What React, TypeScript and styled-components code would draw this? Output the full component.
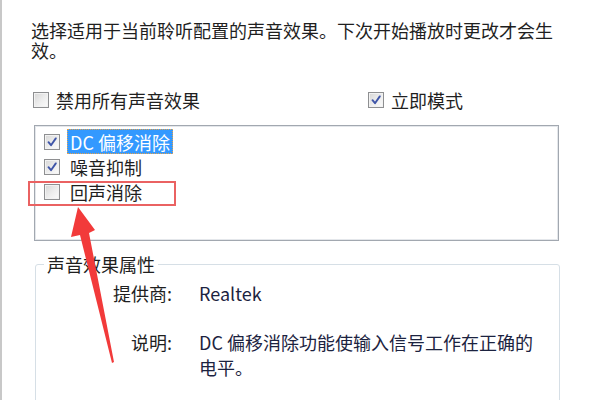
import styled, { createGlobalStyle } from "styled-components";

const GlobalStyle = createGlobalStyle`
  html, body {
    margin: 0;
    padding: 0;
    background: #ffffff;
  }
  body {
    font-family: "Noto Sans CJK SC", "Noto Sans", sans-serif;
    color: #1f1f1f;
  }
`;

const items = [
  { label: "DC 偏移消除", checked: true, selected: true },
  { label: "噪音抑制", checked: true, selected: false },
  { label: "回声消除", checked: false, selected: false },
];

const CheckBox = ({ checked }: { checked: boolean }) => (
  <Box>
    {checked && (
      <svg width="12" height="12" viewBox="0 0 12 12">
        <path
          d="M2.5 6.2 L5 9.2 L9.8 2.4"
          fill="none"
          stroke="#3f55a8"
          strokeWidth="1.9"
          strokeLinecap="round"
          strokeLinejoin="round"
        />
      </svg>
    )}
  </Box>
);

const App = () => {
  return (
    <>
      <GlobalStyle />
      <Page>
        <Intro>
          选择适用于当前聆听配置的声音效果。下次开始播放时更改才会生效。
        </Intro>

        <OptionsRow>
          <Option>
            <CheckBox checked={false} />
            <span>禁用所有声音效果</span>
          </Option>
          <Option>
            <CheckBox checked />
            <span>立即模式</span>
          </Option>
        </OptionsRow>

        <ListBox>
          {items.map((item) => (
            <ListItem key={item.label}>
              <CheckBox checked={item.checked} />
              <ItemLabel selected={item.selected}>{item.label}</ItemLabel>
            </ListItem>
          ))}
        </ListBox>

        <GroupBox>
          <Legend>声音效果属性</Legend>
          <Props>
            <PropLabel>提供商:</PropLabel>
            <PropValue>Realtek</PropValue>
            <PropLabel spaced>说明:</PropLabel>
            <PropValue spaced>
              DC 偏移消除功能使输入信号工作在正确的电平。
            </PropValue>
          </Props>
        </GroupBox>

        <Marker />
        <Arrow width="600" height="400" viewBox="0 0 600 400">
          <polygon
            points="78,207 95,230 89,233 114,362 112,363 80,235 71,237"
            fill="#f23a3a"
          />
        </Arrow>
      </Page>
    </>
  );
};

export default App;

const Page = styled.div`
  position: relative;
  width: 600px;
  height: 400px;
  box-sizing: border-box;
  border-left: 2px solid #c8c8c8;
  padding: 20px 0 0 29px;
  overflow: hidden;
`;

const Intro = styled.p`
  margin: 0;
  width: 535px;
  font-size: 18px;
  line-height: 20px;
`;

const OptionsRow = styled.div`
  display: grid;
  grid-template-columns: 335px auto;
  margin: 30px 0 0 2px;
  height: 20px;
  font-size: 18px;
  line-height: 20px;
`;

const Option = styled.label`
  display: flex;
  align-items: center;
  gap: 7px;
`;

const Box = styled.span`
  flex: none;
  width: 14px;
  height: 14px;
  display: inline-flex;
  align-items: center;
  justify-content: center;
  border: 1px solid #8e8f91;
  box-shadow: inset 0 0 0 1px #f2f2f2;
  background: linear-gradient(135deg, #d6d6d6 0%, #eeeeee 55%, #fbfbfb 100%);
`;

const ListBox = styled.div`
  margin: 15px 0 0 3px;
  width: 525px;
  height: 116px;
  box-sizing: border-box;
  border: 1px solid #a2a8b0;
  box-shadow: inset 0 0 0 1px #e4e7eb;
  padding: 3px 9px 0;
`;

const ListItem = styled.div`
  display: flex;
  align-items: center;
  gap: 7px;
  height: 25px;
  font-size: 18px;
`;

const ItemLabel = styled.span<{ selected: boolean }>`
  display: inline-flex;
  align-items: center;
  height: 25px;
  padding: 0 3px;
  box-sizing: border-box;
  color: ${(p) => (p.selected ? "#ffffff" : "#1f1f1f")};
  background: ${(p) => (p.selected ? "#3399ff" : "transparent")};
  outline: ${(p) => (p.selected ? "1px dotted #e7a24a" : "none")};
  outline-offset: -1px;
`;

const GroupBox = styled.fieldset`
  margin: 13px 0 0 4px;
  padding: 0;
  width: 525px;
  height: 170px;
  box-sizing: border-box;
  border: 1px solid #d6dfe6;
  border-radius: 3px;
  min-inline-size: 0;
`;

const Legend = styled.legend`
  margin-left: 8px;
  padding: 0 3px;
  font-size: 18px;
  line-height: 20px;
`;

const Props = styled.div`
  display: grid;
  grid-template-columns: 136px 340px;
  column-gap: 27px;
  margin-top: 8px;
  font-size: 18px;
`;

const PropLabel = styled.div<{ spaced?: boolean }>`
  text-align: right;
  line-height: ${(p) => (p.spaced ? "25px" : "22px")};
  margin-top: ${(p) => (p.spaced ? "26px" : "0")};
`;

const PropValue = styled.div<{ spaced?: boolean }>`
  color: #1c2340;
  line-height: ${(p) => (p.spaced ? "25px" : "22px")};
  margin-top: ${(p) => (p.spaced ? "26px" : "0")};
`;

const Marker = styled.div`
  position: absolute;
  left: 26px;
  top: 181px;
  width: 148px;
  height: 25px;
  border: 2px solid #ea6262;
  box-sizing: border-box;
`;

const Arrow = styled.svg`
  position: absolute;
  left: -2px;
  top: 0;
  pointer-events: none;
`;
